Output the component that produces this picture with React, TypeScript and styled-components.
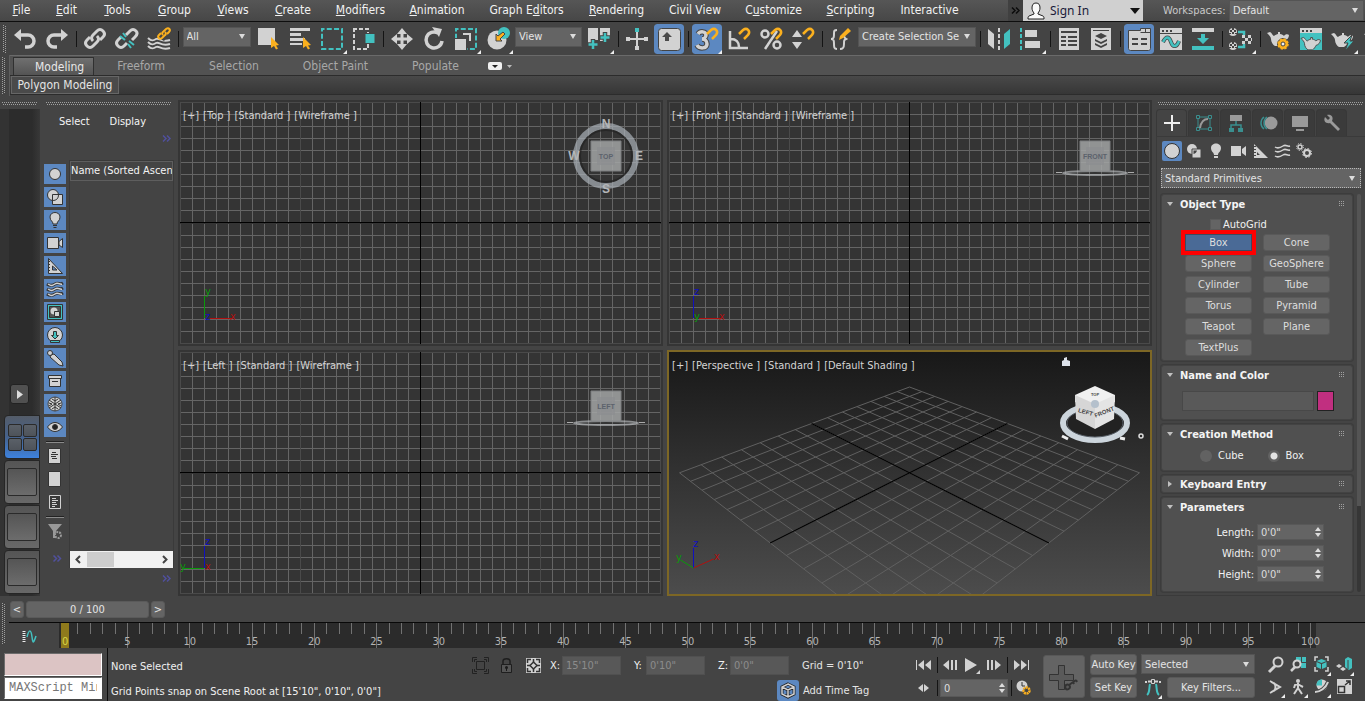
import React from "react";
import styled, { createGlobalStyle, css } from "styled-components";

const L = "#d2d2d2";
const T = "#43c1c0";
const O = "#fbb01e";
const D = "#444444";
const BLUE = "#5c88c1";

const Global = createGlobalStyle`
  * { box-sizing: border-box; }
  html, body { margin: 0; height: 100%; background: #444444; overflow: hidden; }
  body, button, input, select {
    font-family: "DejaVu Sans Condensed", "DejaVu Sans", sans-serif;
    font-size: 11px;
    color: #e4e4e4;
  }
  button { padding: 0; border: 0; background: none; }
`;

const Page = styled.div`
  display: flex;
  flex-direction: column;
  min-height: 100vh;
`;

/* ---------- shared ---------- */

const Svg = styled.svg`
  display: block;
  flex: none;
`;

const HGrip = styled.div`
  height: 4px;
  background:
    repeating-linear-gradient(90deg, #a0a0a0 0 1px, transparent 1px 2px) 0 0 / 100% 1px no-repeat,
    repeating-linear-gradient(90deg, #a0a0a0 0 1px, transparent 1px 2px) 1px 2px / 100% 1px no-repeat;
`;

const VGrip = styled.div`
  width: 4px;
  flex: none;
  background:
    repeating-linear-gradient(#a0a0a0 0 1px, transparent 1px 2px) 0 0 / 1px 100% no-repeat,
    repeating-linear-gradient(#a0a0a0 0 1px, transparent 1px 2px) 2px 1px / 1px 100% no-repeat;
`;

const SelectBox = styled.label<{ $w?: number; $h?: number; $dotted?: boolean }>`
  display: grid;
  align-items: center;
  flex: none;
  width: ${(p) => (p.$w ? `${p.$w}px` : "auto")};
  height: ${(p) => p.$h ?? 20}px;
  background: #646464;
  border: 1px ${(p) => (p.$dotted ? "dotted #b8b8b8" : "solid #545454")};
  &::after {
    content: "";
    grid-area: 1 / 1;
    justify-self: end;
    margin-right: 5px;
    border: 3px solid transparent;
    border-top: 5px solid #dcdcdc;
    border-bottom: 0;
    pointer-events: none;
  }
`;

const Select = styled.select`
  grid-area: 1 / 1;
  appearance: none;
  width: 100%;
  height: 100%;
  border: 0;
  padding: 0 14px 0 3px;
  background: transparent;
  text-overflow: clip;
`;

function Dropdown(p: { label: string; value: string; w?: number; h?: number; dotted?: boolean }) {
  return (
    <SelectBox $w={p.w} $h={p.h} $dotted={p.dotted}>
      <Select aria-label={p.label}>
        <option>{p.value}</option>
      </Select>
    </SelectBox>
  );
}

const Chevrons = ({ color }: { color: string }) => (
  <Svg width="9" height="7" viewBox="0 0 9 7"><path d="M1 .5l3 3-3 3M5 .5l3 3-3 3" fill="none" stroke={color} strokeWidth="1.500" /></Svg>
);

/* ---------- menu bar ---------- */

const MenuBar = styled.header`
  display: flex;
  height: 22px;
  background: linear-gradient(#565656, #474747);
  border-bottom: 1px solid #0e0e0e;
`;

const Menus = styled.nav`
  display: flex;
  flex: 1;
  min-width: 0;
`;

const MenuItem = styled.button<{ $w: number }>`
  flex: none;
  width: ${(p) => p.$w}px;
  height: 20px;
  font-size: 12px;
  color: #f2f2f2;
  white-space: nowrap;
  u { text-underline-offset: 1px; }
`;

const More = styled.button`
  display: grid;
  place-items: center;
  width: 15px;
  height: 21px;
  background: #404040;
`;

const SignIn = styled.button`
  display: flex;
  align-items: center;
  width: 120px;
  height: 21px;
  padding: 0 3px 0 4px;
  gap: 5px;
  background: #d0d0d0;
  color: #1b1b3a;
  font-family: "Noto Sans", sans-serif;
  font-size: 12px;
  span { flex: 1; text-align: left; }
`;

const Workspace = styled.div`
  display: flex;
  align-items: center;
  gap: 4px;
  padding-left: 20px;
  width: 222px;
  color: #c8c8c8;
  span { width: 62px; white-space: nowrap; }
`;

const menus: [string, string, string, number][] = [
  ["", "F", "ile", 43], ["", "E", "dit", 47], ["", "T", "ools", 55], ["", "G", "roup", 59],
  ["", "V", "iews", 58], ["", "C", "reate", 62], ["", "M", "odifiers", 73], ["", "A", "nimation", 80],
  ["Graph E", "d", "itors", 99], ["", "R", "endering", 81], ["Civil View", "", "", 76],
  ["C", "u", "stomize", 81], ["", "S", "cripting", 73], ["Interactive", "", "", 85],
];

function TopMenu() {
  return (
    <MenuBar>
      <Menus>
        {menus.map(([a, k, b, w]) => (
          <MenuItem key={a + k + b} $w={w}>{a}{k && <u>{k}</u>}{b}</MenuItem>
        ))}
      </Menus>
      <More aria-label="More menus"><Chevrons color="#0c0c0c" /></More>
      <SignIn>
        <Svg width="18" height="18" viewBox="0 0 18 18">
          <path d="M9 1c3 0 4 2 4 5 0 2-1 4-2 5v1l5 2c1 .6 1 1.500 1 3H1c0-1.500 0-2.400 1-3l5-2v-1C6 10 5 8 5 6c0-3 1-5 4-5z" fill="#fafafa" stroke="#222" />
        </Svg>
        <span>Sign In</span>
        <Svg width="10" height="6" viewBox="0 0 10 6"><path d="M0 0h10L5 6z" fill="#111" /></Svg>
      </SignIn>
      <Workspace>
        <span>Workspaces:</span>
        <Dropdown label="Workspaces" value="Default" w={135} h={21} />
      </Workspace>
    </MenuBar>
  );
}

/* ---------- main toolbar ---------- */

const Toolbar = styled.div`
  display: flex;
  align-items: center;
  height: 33px;
  padding-left: 2px;
  overflow: hidden;
`;

const ToolGrip = styled(VGrip)`
  height: 28px;
  margin: 0 2px 0 1px;
`;

const Tool = styled.button<{ $on?: boolean }>`
  flex: none;
  width: 32px;
  height: 32px;
  ${(p) => p.$on && css`
    background: ${BLUE};
    background-clip: content-box;
    padding: 1px;
    border-radius: 4px;
    box-shadow: inset 0 0 0 1px #444;
    svg { margin: -1px; }
  `}
`;

const Sep = styled.i`
  flex: none;
  width: 1px;
  height: 16px;
  margin: 0 2px 0 3px;
  background: #141414;
`;

const ToolSelect = styled.div<{ $w: number }>`
  display: flex;
  justify-content: center;
  flex: none;
  width: ${(p) => p.$w}px;
  padding-bottom: 4px;
`;

function Btn(p: { name: string; on?: boolean; fly?: boolean; children: React.ReactNode }) {
  return (
    <Tool aria-label={p.name} $on={p.on}>
      <Svg width="32" height="32" viewBox="0 0 32 32" fill="none">
        {p.children}
        {p.fly && <path d="M31 27v4h-4z" fill="#eee" />}
      </Svg>
    </Tool>
  );
}

const Cursor = ({ x, y }: { x: number; y: number }) => (
  <path transform={`translate(${x} ${y})`} d="M0 0l8 8-3 .5 2 3-2 1-2-3.500-3 2z" fill={O} />
);
const Magnet = ({ x, y }: { x: number; y: number }) => (
  <path transform={`translate(${x} ${y})`} d="M1 6l4-4c4-3 8 1 5 5L6 11" stroke={O} strokeWidth="2.500" />
);
const Teapot = () => (
  <path d="M0 5l3-1c2 1 3 4 4 4 1-1 3-2 4-2V4h2v2c2 0 3 1 4 2 1-2 4-2 5-1 0 3-2 5-5 6-1 2-2 4-4 5H8c-2-1-4-4-4-7 0-2-2-4-4-6z" fill={L} />
);
const Checker = ({ x, y }: { x: number; y: number }) => (
  <g transform={`translate(${x} ${y})`}>
    <circle cx="4" cy="4" r="4" fill={L} />
    <path d="M3 0h2v2H3zM1 2h2v2H1zM5 2h2v2H5zM3 4h2v2H3zM0 5h2v1H0zM6 5h2v1H6z" fill={D} />
  </g>
);

function MainToolbar() {
  return (
    <Toolbar>
      <ToolGrip />
      <Btn name="Undo"><path d="M5 12l7-6v12z" fill={L} /><path d="M11 12h8a6 6 0 0 1 0 12h-3" stroke={L} strokeWidth="3.500" /></Btn>
      <Btn name="Redo"><path d="M27 12l-7-6v12z" fill={L} /><path d="M21 12h-8a6 6 0 0 0 0 12h3" stroke={L} strokeWidth="3.500" /></Btn>
      <Sep />
      <Btn name="Link"><g stroke={L} strokeWidth="3"><path d="M14 18c-2-2-2-4 0-6l4-4c2-2 4-2 6 0s2 4 0 6l-3 3" /><path d="M18 13c2 2 2 4 0 6l-4 4c-2 2-4 2-6 0s-2-4 0-6l3-3" /></g></Btn>
      <Btn name="Unlink"><g stroke={L} strokeWidth="3"><path d="M15 12l4-4c2-2 4-2 6 0s1 4-1 6l-3 3" /><path d="M16 20l-3 3c-2 2-4 2-6 0s-2-4 0-6l3-3" /></g><path d="M9 13l5 4M18 18l5 4M12 10l3 4M17 21l3 4" stroke={T} strokeWidth="2" /></Btn>
      <Btn name="Bind to space warp"><g stroke={L} strokeWidth="2"><path d="M5 15c3 3 5 3 8 1s5 4 14 1" /><path d="M5 19c3 3 5 3 8 1s5 4 14 1" /><path d="M5 23c3 3 5 3 8 1s5 4 14 1" /></g><path d="M14 14l9-10 6 4-8 10z" fill={D} /><g stroke={O} strokeWidth="2"><path d="M20 12c-2-2 0-3 1-4l2-2c3-2 5 1 3 3l-2 2" /><path d="M22 9c2 2 0 3-1 4l-2 2c-3 2-5-1-3-3l2-2" /></g></Btn>
      <Sep />
      <ToolSelect $w={71}><Dropdown label="Selection filter" value="All" w={68} /></ToolSelect>
      <Btn name="Select object"><path d="M6 5h17v17H6z" fill={L} /><Cursor x={19} y={14} /></Btn>
      <Btn name="Select by name"><path d="M6 5h20v3H6zM6 10h11v3H6zM6 15h15v3H6zM6 20h12v2H6z" fill={L} /><Cursor x={19} y={14} /></Btn>
      <Btn name="Rectangular region" fly><path d="M6 6h20v20H6z" stroke={T} strokeWidth="2" strokeDasharray="5 2.270" strokeDashoffset="2.500" /></Btn>
      <Btn name="Window crossing"><path d="M6 6h14v20H6z" stroke={L} strokeWidth="2" strokeDasharray="4 2" strokeDashoffset="1" /><path d="M17 10.500h10v10H17z" fill={T} stroke={D} /></Btn>
      <Sep />
      <Btn name="Move"><path d="M16 5l5 6h-3.500v3.500H21V11l6 5-6 5v-3.500h-3.500V21H21l-5 6-5-6h3.500v-3.500H11V21l-6-5 6-5v3.500h3.500V11H11z" fill={L} /></Btn>
      <Btn name="Rotate"><path d="M20 10a8 8 0 1 0 4 8" stroke={L} strokeWidth="3.500" /><path d="M14 4l10 2-3 8z" fill={L} /></Btn>
      <Btn name="Scale" fly><path d="M6 6h20v20H6z" stroke={T} strokeWidth="2" strokeDasharray="5 2.270" strokeDashoffset="2.500" /><path d="M4 15h13v13H4z" fill={D} /><path d="M5 16h11v11H5z" fill={L} /><path d="M13 11h7v7" stroke={L} strokeWidth="2" /></Btn>
      <Btn name="Place" fly><circle cx="15" cy="17" r="9.500" fill={L} /><circle cx="22" cy="10" r="6" fill={T} /><path d="M14 18v-7l2 2 5-4 2 2-5 5 2 2z" fill={O} stroke={D} /></Btn>
      <ToolSelect $w={69}><Dropdown label="Reference coordinate system" value="View" w={67} /></ToolSelect>
      <Btn name="Pivot center" fly><path d="M5 5h10v12h-3v3H5zM17 5h10v8h-4v5h-6z" fill={L} /><path d="M10 16v11M5 21.500h10M22 9v11M17 14.500h10" stroke={D} strokeWidth="4.500" /><path d="M10 17v9M5.500 21.500h9M22 10v9M17.500 14.500h9" stroke={T} strokeWidth="2.500" /></Btn>
      <Sep />
      <Btn name="Manipulate"><path d="M16 8v18M6 16h20" stroke={L} strokeWidth="2" /><path d="M14 5h4v4h-4z" fill={T} /><path d="M5 14h4v4H5zM23 14h4v4h-4zM14 23h4v4h-4z" fill={L} /></Btn>
      <Btn name="Keyboard shortcut override" on><rect x="5.500" y="5.500" width="22" height="22" rx="3" fill={L} stroke={D} /><path d="M14 9l5 5h-3v4h-4v-4H9z" fill="#4a4a4a" /></Btn>
      <Sep />
      <Btn name="Snaps toggle" on fly><path d="M7 11c2-3 8-3 8 1 0 2-2 4-4 4 3 0 5 2 5 5 0 5-8 5-10 1" stroke={D} strokeWidth="5.500" /><path d="M7 11c2-3 8-3 8 1 0 2-2 4-4 4 3 0 5 2 5 5 0 5-8 5-10 1" stroke={L} strokeWidth="3.500" /><Magnet x={15} y={5} /></Btn>
      <Btn name="Angle snap"><path d="M7 8v17h18M8 16c5 0 8 3 8 8" stroke={L} strokeWidth="2.500" /><Magnet x={15} y={5} /></Btn>
      <Btn name="Percent snap"><circle cx="10" cy="11" r="3.500" stroke={L} strokeWidth="2.500" /><circle cx="22" cy="22" r="3.500" stroke={L} strokeWidth="2.500" /><path d="M22 8L10 26" stroke={L} strokeWidth="2.500" /><Magnet x={15} y={5} /></Btn>
      <Btn name="Spinner snap"><path d="M5 14l5-7 5 7zM5 19h10l-5 7z" fill={L} /><Magnet x={15} y={5} /></Btn>
      <Sep />
      <Btn name="Edit named selection sets"><path d="M12 7c-3 0-3 1-3 4s0 5-3 5c3 0 3 2 3 5s0 5 3 5M15 26c3 0 4-1 4-5s0-4 2-5c-2-1-2-2-2-4" stroke={L} strokeWidth="2" /><path d="M14 17l1-4 8-8 3 3-8 7z" fill={O} /></Btn>
      <ToolSelect $w={120}><Dropdown label="Named selection sets" value="Create Selection Se" w={118} /></ToolSelect>
      <Sep />
      <Btn name="Mirror"><path d="M5 6l6 5v15l-6-5z" fill={L} /><path d="M16 5v22" stroke={L} strokeWidth="2" strokeDasharray="4 2" /><path d="M27 6l-6 5v15l6-5z" fill={T} /></Btn>
      <Btn name="Align" fly><path d="M6 5v22" stroke={T} strokeWidth="2" strokeDasharray="4 2" /><path d="M10 7h12v7H10zM10 18h15v7H10z" fill={L} /></Btn>
      <Sep />
      <Btn name="Scene explorer"><path d="M6 5h20v22H6z" fill={L} /><path d="M8 9h16M8 14h5M15 14h9M8 18h5M15 18h9M8 22h5M15 22h9" stroke={D} strokeWidth="2" /></Btn>
      <Btn name="Layer explorer"><path d="M6 5h20v22H6z" fill={L} /><path d="M8 7.500h16" stroke={D} /><path d="M16 10l6 3-6 3-6-3zM10 16l6 3 6-3v2l-6 3-6-3zM10 20l6 3 6-3v2l-6 3-6-3z" fill={D} /></Btn>
      <Sep />
      <Btn name="Ribbon" on><path d="M5.500 7.500h12v-2h10v20c0 1-1 2-2 2h-18c-1 0-2-1-2-2z" fill={L} stroke={D} /><path d="M17.500 9.500h10M22.500 5v4" stroke={D} /><path d="M9 16h6M18 16h6M9 21h6M18 21h6" stroke={D} strokeWidth="2" /></Btn>
      <Btn name="Curve editor"><path d="M5 5h22v22H5z" fill={L} /><path d="M5 10.500h22" stroke={D} /><path d="M7 8h2M11 8h2M15 8h2" stroke={D} strokeWidth="2" /><path d="M8 19c3-6 6-6 8 0s6 5 8-1" stroke={D} strokeWidth="4" /><path d="M8 19c3-6 6-6 8 0s6 5 8-1" stroke={T} strokeWidth="2.500" /></Btn>
      <Btn name="Schematic view"><path d="M5 5h22v4H5z" fill={L} /><path d="M14 11h4v4h4l-6 6-6-6h4zM5 23h22v4H5z" fill={T} /></Btn>
      <Sep />
      <Btn name="Material editor" fly><path d="M13 9h6v3M13 24h6v-3" stroke={T} strokeWidth="2.500" /><Checker x={4} y={5} /><Checker x={4} y={19} /><path d="M17 12h3v3h-3zM23 12h3v3h-3zM20 15h3v3h-3zM17 18h3v3h-3zM23 18h3v3h-3zM26 15h1v3h-1z" fill={L} /></Btn>
      <Sep />
      <Btn name="Render setup"><g transform="translate(4 5)"><Teapot /></g><circle cx="20" cy="21" r="5.500" fill={O} stroke={D} /><circle cx="20" cy="21" r="4.500" stroke={O} strokeWidth="2.500" strokeDasharray="2 1.530" /><circle cx="20" cy="21" r="2" fill="#f0f0f0" stroke={D} /></Btn>
      <Btn name="Rendered frame window"><path d="M5 5h22v22H5z" fill={T} /><path d="M5 5h22v5H5z" fill={L} /><path d="M7 8h2M11 8h2M15 8h2" stroke={D} strokeWidth="2" /><g transform="translate(6 11) scale(.88)" stroke={D}><Teapot /></g></Btn>
      <Btn name="Render production" fly><g transform="translate(4 6)"><Teapot /></g><path d="M25 12l-8 8h4l-3 8 9-10h-4z" fill={T} stroke={D} /></Btn>
      <Btn name="Render in cloud"><g transform="translate(5 6)"><Teapot /></g></Btn>
    </Toolbar>
  );
}

/* ---------- ribbon ---------- */

const Ribbon = styled.section`
  display: flex;
  height: 41px;
  padding-left: 2px;
  gap: 3px;
`;

const RibbonGrip = styled(VGrip)`margin: 2px 0;`;

const RibbonBody = styled.div`
  flex: 1;
  border-left: 1px solid #5e5e5e;
`;

const Tabs = styled.div`
  display: flex;
  align-items: flex-end;
  height: 21px;
  padding-left: 3px;
  background: #525252;
  border-top: 1px solid #6a6a6a;
  border-bottom: 1px solid #2c2c2c;
`;

const RibbonTab = styled.button<{ $on?: boolean }>`
  height: 18px;
  padding: 0 22px;
  font-size: 12px;
  color: #a8a8a8;
  ${(p) => p.$on && css`
    padding: 0 9px 0 21px;
    margin-right: 1px;
    color: #e8e8e8;
    background: linear-gradient(#707070, #545454);
    border: 1px solid #303030;
    border-bottom: 0;
  `}
`;

const RibbonMenu = styled.button`
  display: flex;
  align-items: center;
  gap: 5px;
  height: 18px;
  margin-left: 7px;
`;

const RibbonPanels = styled.div`
  display: flex;
  height: 19px;
  padding-left: 1px;
  background: linear-gradient(#494949, #363636);
  border-bottom: 1px solid #2c2c2c;
`;

const PanelButton = styled.button`
  padding: 0 4px;
  width: 108px;
  font-size: 12px;
  background: #4a4a4a;
  border: 1px solid #666;
  white-space: nowrap;
`;

function RibbonBar() {
  return (
    <Ribbon>
      <RibbonGrip />
      <RibbonBody>
        <Tabs>
          <RibbonTab $on>Modeling</RibbonTab>
          <RibbonTab>Freeform</RibbonTab>
          <RibbonTab>Selection</RibbonTab>
          <RibbonTab>Object Paint</RibbonTab>
          <RibbonTab>Populate</RibbonTab>
          <RibbonMenu aria-label="Ribbon display">
            <Svg width="14" height="8" viewBox="0 0 14 8"><rect width="14" height="8" rx="2" fill="#f0f0f0" /><path d="M4 3h6L7 6z" fill="#222" /></Svg>
            <Svg width="5" height="3" viewBox="0 0 5 3"><path d="M0 0h5L2.500 3z" fill="#bbb" /></Svg>
          </RibbonMenu>
        </Tabs>
        <RibbonPanels><PanelButton>Polygon Modeling</PanelButton></RibbonPanels>
      </RibbonBody>
    </Ribbon>
  );
}

/* ---------- workspace ---------- */

const Main = styled.main`
  display: flex;
  flex: 1;
  padding-top: 4px;
`;

const LayoutColumn = styled.aside`
  display: flex;
  flex-direction: column;
  width: 40px;
  flex: none;
`;

const LayoutGrip = styled(HGrip)`margin: 2px 3px 3px 2px;`;

const LayoutBar = styled.div`
  display: flex;
  flex-direction: column;
  justify-content: flex-end;
  align-items: flex-end;
  gap: 1px;
  flex: 1;
  padding-bottom: 2px;
  background: linear-gradient(90deg, #333 0 9px, #2c2c2c 9px 32px, #383838);
`;

const Expand = styled.button`
  display: grid;
  place-items: center;
  width: 19px;
  height: 20px;
  margin: 0 11px 10px 0;
  background: #505050;
  border: 1px solid #222;
  border-radius: 3px;
`;

const LayoutTab = styled.button<{ $on?: boolean }>`
  display: grid;
  grid-template-columns: ${(p) => (p.$on ? "14px 14px" : "30px")};
  grid-auto-rows: ${(p) => (p.$on ? 13 : 28)}px;
  gap: 1px;
  place-content: center;
  width: 36px;
  height: 44px;
  border: 1px solid #262626;
  border-radius: 4px 0 0 4px;
  background: ${(p) => (p.$on ? "linear-gradient(#545c68, #46628c 50%, #3d82de)" : "linear-gradient(#555, #686868)")};
`;

const Pane = styled.i<{ $tint?: boolean }>`
  border: 1px solid #2a2a2a;
  border-radius: 2px;
  background: ${(p) => (p.$tint ? "linear-gradient(#5a6068, #4e535a)" : "linear-gradient(#555, #6c6c6c)")};
`;

function LayoutTabs() {
  return (
    <LayoutColumn>
      <LayoutGrip />
      <LayoutBar>
        <Expand aria-label="Expand layouts"><Svg width="6" height="9" viewBox="0 0 6 9"><path d="M0 0l6 4.500L0 9z" fill="#ddd" /></Svg></Expand>
        <LayoutTab $on aria-label="Four views"><Pane $tint /><Pane $tint /><Pane $tint /><Pane $tint /></LayoutTab>
        <LayoutTab aria-label="Layout 2"><Pane /></LayoutTab>
        <LayoutTab aria-label="Layout 3"><Pane /></LayoutTab>
        <LayoutTab aria-label="Layout 4"><Pane /></LayoutTab>
      </LayoutBar>
    </LayoutColumn>
  );
}

const Explorer = styled.aside`
  display: flex;
  flex-direction: column;
  width: 138px;
  flex: none;
  padding: 2px 5px 0 4px;
`;

const ExplorerGrip = styled(HGrip)`margin: 0 2px;`;

const ExplorerMenu = styled.div`
  display: flex;
  gap: 20px;
  padding: 8px 0 0 15px;
  button { color: #f4f4f4; height: 14px; }
`;

const Chevron = styled.button`
  display: grid;
  place-items: center;
  align-self: flex-end;
  width: 12px;
  height: 15px;
  margin: 3px 1px 0 0;
`;

const ExplorerBody = styled.div`
  display: flex;
  gap: 3px;
  margin-top: 14px;
`;

const FilterColumn = styled.div`
  display: flex;
  flex-direction: column;
  align-items: center;
  gap: 3px;
  width: 22px;
  padding-top: 4px;
`;

const Filter = styled.button<{ $off?: boolean }>`
  width: 22px;
  height: 20px;
  background: ${(p) => (p.$off ? "transparent" : BLUE)};
`;

const Rule = styled.i`
  width: 18px;
  height: 2px;
  margin: 1px 0 0;
  background: #8a8a8a;
  border-top: 1px solid #222;
`;

const List = styled.div`
  display: flex;
  flex-direction: column;
  width: 105px;
  height: 408px;
  border: 1px solid #3a3a3a;
  border-bottom: 0;
`;

const ListHead = styled.div`
  flex: none;
  height: 20px;
  border: 1px solid #5e5e5e;
  line-height: 18px;
  color: #f4f4f4;
  white-space: nowrap;
  overflow: hidden;
`;

const ScrollBar = styled.div`
  display: flex;
  align-items: center;
  height: 17px;
  margin-top: auto;
  padding: 0 5px;
  background: #f1f1f1;
  i { width: 27px; height: 15px; margin: 0 auto 0 6px; background: #cdcdcd; }
`;

function F(p: { name: string; off?: boolean; children: React.ReactNode }) {
  return (
    <Filter aria-label={p.name} $off={p.off}>
      <Svg width="22" height="20" viewBox="0 0 22 20" fill={L} stroke="#333">{p.children}</Svg>
    </Filter>
  );
}

function SceneExplorer() {
  return (
    <Explorer>
      <ExplorerGrip />
      <ExplorerMenu><button>Select</button><button>Display</button></ExplorerMenu>
      <Chevron aria-label="More"><Chevrons color="#50509c" /></Chevron>
      <ExplorerBody>
        <FilterColumn>
          <F name="Geometry"><circle cx="11" cy="10" r="5.500" /></F>
          <F name="Shapes"><circle cx="9" cy="8" r="5.500" /><path d="M8.500 7.500h10v10h-10z" /><path d="M14.500 7.500c0 4-2 6-6 6" fill="none" /></F>
          <F name="Lights"><path d="M9 14c0-3-3-3-3-7 0-6 10-6 10 0 0 4-3 4-3 7zM9 15.500h4M9.500 17.500h3" /></F>
          <F name="Cameras"><path d="M3.500 4.500h11v11h-11zM15 8.500l3.500-3v9L15 12z" /></F>
          <F name="Helpers"><path d="M4.500 2.500v15h14z" /><path d="M8.500 10v4H13z" fill={BLUE} /><path d="M4 5.500h2M4 8.500h2M4 11.500h2M4 14.500h2" /></F>
          <F name="Space warps"><g fill="none"><path d="M3 5c3 2 5 2 8 0s5 1 8-1M3 10c3 2 5 2 8 0s5 1 8-1M3 15c3 2 5 2 8 0s5 1 8-1" strokeWidth="3" /><path d="M4 5c3 2 4 2 7 0s5 1 7 0M4 10c3 2 4 2 7 0s5 1 7 0M4 15c3 2 4 2 7 0s5 1 7 0" stroke={L} strokeWidth="1.500" /></g></F>
          <F name="Groups"><path d="M3.500 2.500h15v15h-15z" fill={T} /><path d="M5.500 4.500h11v11h-11z" fill="#555" /><circle cx="10" cy="9" r="3.500" stroke="none" /><path d="M10.500 9.500h5v5h-5z" /></F>
          <F name="Xrefs"><circle cx="11" cy="10" r="7.500" /><path d="M9.500 6.500h3v4h2l-3.500 3.500-3.500-3.500h2zM6.500 15.500h9v2h-9z" fill={T} /></F>
          <F name="Bones"><path d="M7 7l3-1 8 8 1 4-4-1-9-8z" /><circle cx="6" cy="5" r="2.500" /></F>
          <F name="Containers"><path d="M5.500 7.500h11v8h-11zM4.500 4.500h13v3h-13z" /><path d="M8 10.500h6" /></F>
          <F name="Frozen"><circle cx="11" cy="10" r="7" stroke="#444" /><path d="M11 3v14M5 6l12 8M17 6L5 14" fill="none" /><path d="M8 5l3 2 3-2M8 15l3-2 3 2M5 9l3 1-3 2M17 9l-3 1 3 2" fill="none" /></F>
          <F name="Hidden"><path d="M3.500 10c4-6 11-6 15 0-4 6-11 6-15 0z" /><circle cx="11" cy="10" r="2.500" fill="#222" /></F>
          <Rule />
          <F name="Display all" off><path d="M4.500 2.500h12v15h-12z" /><path d="M8 6.500h4M7 8.500h7M7 10.500h5M8 12.500h5" /></F>
          <F name="Display none" off><path d="M4.500 2.500h12v15h-12z" /></F>
          <F name="Invert display" off><path d="M5.500 3.500h11v13h-11z" fill="#3a3a3a" stroke={L} /><path d="M8 6.500h4M8 8.500h6M8 10.500h4M8 12.500h5M8 14.500h3" stroke={L} /></F>
          <Rule />
          <F name="Filter settings" off><path d="M4 3h14l-6 7v7H9v-7z" fill="#999" stroke="none" /><circle cx="14" cy="14" r="3" fill={D} stroke="#999" strokeWidth="2" strokeDasharray="2 1" /></F>
          <F name="More filters" off><path d="M9.500 11.500l3 3-3 3M13.500 11.500l3 3-3 3" fill="none" stroke="#50509c" strokeWidth="1.500" /></F>
        </FilterColumn>
        <List>
          <ListHead>Name (Sorted Ascend</ListHead>
          <ScrollBar>
            <Svg width="6" height="9" viewBox="0 0 6 9"><path d="M5 1L1.500 4.500 5 8" fill="none" stroke="#444" strokeWidth="2" /></Svg>
            <i />
            <Svg width="6" height="9" viewBox="0 0 6 9"><path d="M1 1l3.500 3.500L1 8" fill="none" stroke="#444" strokeWidth="2" /></Svg>
          </ScrollBar>
        </List>
      </ExplorerBody>
      <Chevron aria-label="More columns"><Chevrons color="#50509c" /></Chevron>
    </Explorer>
  );
}

/* ---------- viewports ---------- */

const Viewports = styled.section`
  display: grid;
  grid-template: 1fr 1fr / 1fr 1fr;
  gap: 4px;
  flex: 1;
  min-width: 0;
`;

const Viewport = styled.div<{ $active?: boolean }>`
  position: relative;
  display: flex;
  flex-direction: column;
  min-height: 0;
  border: 2px solid ${(p) => (p.$active ? "#7d6725" : "#353535")};
  background: ${(p) => (p.$active ? "linear-gradient(#181818, #4c4c4c)" : "#343434")};
`;

const HalfGrid = styled.div<{ $lower?: boolean }>`
  ${(p) => (p.$lower ? "flex: 1; margin-top: 1px;" : "height: calc(50% - 1px);")}
  background-image:
    linear-gradient(90deg, #4a4a4a 1px, transparent 1px),
    linear-gradient(#4a4a4a 1px, transparent 1px),
    linear-gradient(90deg, #656565 1px, transparent 1px),
    linear-gradient(#656565 1px, transparent 1px);
  background-size: 120px 120px, 120px 120px, 12px 12px, 12px 12px;
  background-position: 0 ${(p) => (p.$lower ? -1 : 0)}px;
`;

const AxisLine = styled.i`
  flex: none;
  height: 1px;
  background: #000;
  &::after {
    content: "";
    position: absolute;
    top: 0;
    bottom: 0;
    left: calc(50% - 1px);
    width: 1px;
    background: #000;
  }
`;

const ViewLabel = styled.div`
  position: absolute;
  top: 6px;
  left: 3px;
  display: flex;
  gap: 4px;
  z-index: 1;
  button { color: #d4d4d4; height: 14px; white-space: pre; }
`;

const Gizmo = styled.svg`
  position: absolute;
  left: 0;
  bottom: 18px;
  font-size: 11px;
`;

const Cube = styled.svg`
  position: absolute;
  top: 5px;
  right: 0;
  font-family: "Liberation Sans", sans-serif;
  font-weight: bold;
  text-anchor: middle;
`;

const Scene = styled.svg`
  width: 100%;
  height: 100%;
`;

const R = "#b01010";
const G = "#0a9a0a";
const B = "#1010c0";

function Label({ parts }: { parts: string[] }) {
  return <ViewLabel>{parts.map((t) => <button key={t}>[{t}]</button>)}</ViewLabel>;
}

function FlatCube({ face }: { face: string }) {
  return (
    <Cube width="110" height="90" viewBox="0 0 110 90">
      {face === "TOP" ? (
        <g>
          <circle cx="55" cy="49" r="30" fill="none" stroke="#aab0b8" strokeOpacity=".7" strokeWidth="6" />
          <circle cx="55" cy="49" r="26" fill="none" stroke="#222" strokeOpacity=".7" strokeWidth="2" />
          <g fill="#b4b6b8" fontSize="12"><text x="55" y="21">N</text><text x="55" y="86">S</text><text x="23" y="53">W</text><text x="88" y="53">E</text></g>
        </g>
      ) : (
        <g fill="none">
          <ellipse cx="55" cy="66" rx="32" ry="2" stroke="#c4c8cc" strokeOpacity=".6" strokeWidth="2" />
          <path d="M16 65.500h6M88 65.500h6" stroke="#aaa" />
        </g>
      )}
      <path d="M40 34h30v30H40z" fill="#a2a4a4" fillOpacity=".85" stroke="#7c7e80" />
      <path d="M46 40h18v18H46z" fill="#8b8d90" fillOpacity=".7" />
      <text x="55" y="52" fontSize="7" fill="#5c626c">{face}</text>
    </Cube>
  );
}

function FlatView({ name, axes }: { name: string; axes: React.ReactNode }) {
  return (
    <Viewport>
      <HalfGrid />
      <AxisLine />
      <HalfGrid $lower />
      <Label parts={["+", `${name} `, "Standard ", "Wireframe "]} />
      <FlatCube face={name.toUpperCase()} />
      <Gizmo width="60" height="46" viewBox="0 0 60 46">{axes}</Gizmo>
    </Viewport>
  );
}

/* Ground plane point (u, v in -1..1) projected to the scene's coordinates. */
const project = (u: number, v: number) => {
  const a = u + v;
  const w = 1 - 0.1748 * a;
  return `${(240.5 + (115 * (u - v)) / w).toFixed(1)} ${(120.8 + (57.9 * a) / w).toFixed(1)}`;
};
const DIV = 7;
const steps = Array.from({ length: DIV * 2 + 1 }, (_, i) => (i - DIV) / DIV);

function PerspectiveView() {
  return (
    <Viewport $active>
      <Scene viewBox="0 0 481 242" preserveAspectRatio="xMidYMid slice" fill="none">
        {steps.map((s) => <path key={s} d={`M${project(s, -1)}L${project(s, 1)}M${project(-1, s)}L${project(1, s)}`} stroke="#606060" />)}
        <path d={`M${project(0, -1)}L${project(0, 1)}M${project(-1, 0)}L${project(1, 0)}`} stroke="#000" strokeWidth="1.200" />
      </Scene>
      <Label parts={["+", "Perspective ", "Standard ", "Default Shading "]} />
      <Cube width="110" height="100" viewBox="0 0 110 100">
        <path d="M22 4l2-1V1l3-1v3l3 1v5h-8z" fill="#dde2ea" />
        <ellipse cx="55" cy="66" rx="32" ry="17" stroke="#ccd5dc" strokeWidth="6" fill="#222" />
        <ellipse cx="55" cy="66" rx="28" ry="14" stroke="#555c64" fill="none" />
        <path d="M55 29l20 9v7L55 54 35 45v-7z" fill="#f0f0f0" />
        <path d="M35 38l20 9v25L36 62z" fill="#d6d6d6" />
        <path d="M75 38l-20 9v25l19-10z" fill="#e4e4e4" />
        <g fill="#444"><text transform="translate(45 57) rotate(16)" fontSize="6">LEFT</text><text transform="translate(65 57) rotate(-22)" fontSize="6">FRONT</text><text x="55" y="39" fontSize="4">TOP</text></g>
        <circle cx="55" cy="47" r="4" fill="#b4c0cc" />
        <path d="M22 79l6 3M80 81l5 1" stroke="#eee" strokeWidth="3" />
        <circle cx="101" cy="79" r="2" fill="none" stroke="#ddd" strokeWidth="1.500" />
      </Cube>
      <Gizmo width="60" height="46" viewBox="0 0 60 46">
        <path d="M24.500 38V18" stroke={B} /><path d="M24.500 38l20-9" stroke={R} /><path d="M24.500 38l-13-8" stroke={G} />
        <text x="24" y="17" fill={B}>z</text><text x="45" y="30" fill={R}>x</text><text x="7" y="31" fill={G}>y</text>
      </Gizmo>
    </Viewport>
  );
}

/* ---------- command panel ---------- */

const Command = styled.aside`
  display: flex;
  flex-direction: column;
  width: 209px;
  flex: none;
  margin-left: 4px;
  padding-top: 2px;
`;

const CommandGrip = styled(HGrip)`margin: 0 2px 3px;`;

const CommandTabs = styled.div`
  display: flex;
  gap: 1px;
`;

const CommandTab = styled.button<{ $on?: boolean }>`
  display: grid;
  place-items: center;
  width: 31px;
  height: 27px;
  border: 1px solid #383838;
  border-bottom: 0;
  border-radius: 4px 4px 0 0;
  background: ${(p) => (p.$on ? "#444" : "#3b3b3b")};
`;

const CommandBody = styled.div`
  display: flex;
  flex-direction: column;
  flex: 1;
  padding: 4px 4px 3px;
  border: 1px solid #3a3a3a;
  border-right: 0;
`;

const Categories = styled.div`
  display: flex;
  gap: 2px;
  padding-left: 1px;
  margin-bottom: 7px;
`;

const Category = styled.button<{ $on?: boolean }>`
  width: 20px;
  height: 20px;
  border-radius: 2px;
  background: ${(p) => (p.$on ? BLUE : "transparent")};
`;

const RollArea = styled.div`
  display: flex;
  gap: 4px;
  margin-top: 6px;
  flex: 1;
`;

const Rolls = styled.div`
  display: flex;
  flex-direction: column;
  gap: 4px;
  flex: 1;
`;

const RollScroll = styled.div`
  width: 4px;
  background: linear-gradient(#545454 0 312px, #363636 312px);
  border-radius: 2px;
`;

const Roll = styled.section<{ $h?: number }>`
  min-height: ${(p) => p.$h ?? 0}px;
  background: #505050;
  border: 1px solid #434343;
  box-shadow: 0 0 0 1px #3c3c3c;
  border-radius: 3px;
  ${(p) => !p.$h && "flex: 1;"}
`;

const RollHead = styled.button<{ $closed?: boolean }>`
  display: flex;
  align-items: center;
  width: 100%;
  height: ${(p) => (p.$closed ? 16 : 18)}px;
  padding: 0 7px 0 5px;
  gap: 7px;
  font-weight: bold;
  color: #f4f4f4;
  span { flex: 1; text-align: left; }
`;

const CheckRow = styled.label`
  display: flex;
  align-items: center;
  gap: 2px;
  height: 16px;
  margin: 3px 0 0 48px;
  color: #f0f0f0;
  input { appearance: none; width: 11px; height: 11px; margin: 0; background: #646464; border: 1px solid #5a5a5a; }
`;

const ButtonGrid = styled.div`
  display: grid;
  grid-template-columns: 67px 67px;
  gap: 4px 11px;
  margin: 2px 0 0 23px;
`;

const ObjectButton = styled.button<{ $on?: boolean }>`
  height: 17px;
  border-radius: 3px;
  border: 1px solid #595959;
  background: #656565;
  color: #dedede;
  ${(p) => p.$on && css`
    background: #4a6a96;
    border-color: #3c4a5e;
    border-radius: 0;
    outline: 4px solid #ff0000;
    z-index: 1;
  `}
`;

const NameRow = styled.div`
  display: flex;
  gap: 3px;
  padding: 7px 0 0 20px;
  input { width: 132px; height: 20px; background: #595959; border: 1px solid #484848; }
  button { width: 17px; height: 20px; background: #c12f80; border: 1px solid #222; }
`;

const Radios = styled.div`
  display: flex;
  gap: 24px;
  padding: 6px 0 0 38px;
`;

const RadioLabel = styled.label`
  display: flex;
  align-items: center;
  gap: 6px;
  color: #f0f0f0;
  input {
    appearance: none;
    width: 12px;
    height: 12px;
    margin: 0;
    border-radius: 6px;
    background: #626262;
  }
  input:checked { background: radial-gradient(circle, #e4e4e4 0 3px, #626262 4px); }
`;

const Params = styled.div`
  display: flex;
  flex-direction: column;
  gap: 5px;
  padding: 8px 28px 0 0;
`;

const ParamRow = styled.label`
  display: flex;
  justify-content: flex-end;
  align-items: center;
  gap: 3px;
  height: 16px;
  color: #f0f0f0;
`;

const Spin = styled.span<{ $w: number; $h: number }>`
  display: flex;
  align-items: center;
  width: ${(p) => p.$w}px;
  height: ${(p) => p.$h}px;
  padding: 0 2px;
  background: #646464;
  border: 1px solid #585858;
  input { flex: 1; min-width: 0; border: 0; padding: 0 1px; background: transparent; color: #ddd; }
`;

const Arrows = () => (
  <Svg width="6" height="10" viewBox="0 0 6 10"><path d="M0 4l3-4 3 4zM0 6h6l-3 4z" fill="#ddd" /></Svg>
);

function Rollout(p: { title: string; h?: number; closed?: boolean; children?: React.ReactNode }) {
  return (
    <Roll $h={p.h}>
      <RollHead $closed={p.closed}>
        <Svg width="6" height="6" viewBox="0 0 6 6"><path d={p.closed ? "M1 0l4 3-4 3z" : "M0 1h6L3 5z"} fill="#c0c0c0" /></Svg>
        <span>{p.title}</span>
        <Svg width="6" height="6" viewBox="0 0 6 6"><path d="M0 .5h6M0 2.500h6M0 4.500h6" stroke="#a0a0a0" strokeDasharray="1 1" /></Svg>
      </RollHead>
      {p.children}
    </Roll>
  );
}

function Cat(p: { name: string; on?: boolean; children: React.ReactNode }) {
  return (
    <Category aria-label={p.name} $on={p.on}>
      <Svg width="20" height="20" viewBox="0 0 20 20" fill={L}>{p.children}</Svg>
    </Category>
  );
}

const A = "#9a9a9a";
const T2 = "#3a8f8f";

function CommandPanel() {
  return (
    <Command>
      <CommandGrip />
      <CommandTabs>
        <CommandTab $on aria-label="Create"><Svg width="18" height="18" viewBox="0 0 18 18"><path d="M9 1v16M1 9h16" stroke="#eee" strokeWidth="2" /></Svg></CommandTab>
        <CommandTab aria-label="Modify"><Svg width="18" height="18" viewBox="0 0 18 18" fill="none"><path d="M4 3h10M3 4v10M15 4v10M4 15h10" stroke={T2} /><path d="M1.500 1.500h3v3h-3zM13.500 1.500h3v3h-3zM1.500 13.500h3v3h-3zM13.500 13.500h3v3h-3z" fill="#3b3b3b" stroke={T2} /><path d="M5 14C6 8 9 5 13 5" stroke={A} strokeWidth="2" /></Svg></CommandTab>
        <CommandTab aria-label="Hierarchy"><Svg width="18" height="18" viewBox="0 0 18 18"><path d="M3 1h12v6H3z" fill={A} /><path d="M9 7v4M4 14v-3h10v3" fill="none" stroke={T2} strokeWidth="1.500" /><path d="M2 14h5v4H2zM11 14h5v4h-5z" fill={T2} /></Svg></CommandTab>
        <CommandTab aria-label="Motion"><Svg width="20" height="18" viewBox="0 0 20 18" fill="none"><circle cx="13" cy="9" r="6.500" fill={A} /><path d="M6 3c-4 3-4 9 0 12M9 3c-4 3-4 9 0 12" stroke={T2} strokeWidth="1.500" /></Svg></CommandTab>
        <CommandTab aria-label="Display"><Svg width="18" height="18" viewBox="0 0 18 18"><path d="M1 2h16v11H1zM5 15h8v2H5z" fill={A} /></Svg></CommandTab>
        <CommandTab aria-label="Utilities"><Svg width="18" height="18" viewBox="0 0 18 18"><path d="M2 3l3 3 2-2-3-3c4-1 7 2 5 6l8 8-2 2-8-8c-4 1-7-2-5-6z" fill={A} /></Svg></CommandTab>
      </CommandTabs>
      <CommandBody>
        <Categories>
          <Cat name="Geometry" on><circle cx="10" cy="10" r="7.500" stroke="#333" /></Cat>
          <Cat name="Shapes"><circle cx="8" cy="8" r="5" /><path d="M8 8h9v9H8z" stroke={D} /><path d="M9.500 9.500H13c-.5 2-1.500 3-3.500 3.500z" fill={D} /></Cat>
          <Cat name="Lights"><path d="M8 14c0-3-3-3-3-7 0-6 10-6 10 0 0 4-3 4-3 7zM8 15h4v2H8z" /></Cat>
          <Cat name="Cameras"><path d="M3 5h10v10H3zM14 8l4-3v10l-4-3z" /></Cat>
          <Cat name="Helpers"><path d="M4 3v14h14z" /><path d="M7 11v3h3zM4 5h2v1H4zM4 8h2v1H4zM4 11h2v1H4zM4 14h2v1H4z" fill={D} /></Cat>
          <Cat name="Space warps"><path d="M3 6c3 2 5 1 8-1s4 1 7 0M3 10c3 2 5 1 8-1s4 1 7 0M3 15c3 2 5 1 8-1s4 1 7 0" fill="none" stroke={L} strokeWidth="1.500" /></Cat>
          <Cat name="Systems"><g fill="none" stroke={L}><circle cx="6" cy="6" r="2" strokeWidth="1.500" /><circle cx="6" cy="6" r="3.500" strokeDasharray="1.200 1.550" /><circle cx="13" cy="12" r="3" strokeWidth="2" /><circle cx="13" cy="12" r="4.500" strokeDasharray="1.800 1.730" /></g></Cat>
        </Categories>
        <Dropdown label="Object category" value="Standard Primitives" dotted />
        <RollArea>
          <Rolls>
            <Rollout title="Object Type" h={167}>
              <CheckRow><input type="checkbox" />AutoGrid</CheckRow>
              <ButtonGrid>
                <ObjectButton $on>Box</ObjectButton>
                {["Cone", "Sphere", "GeoSphere", "Cylinder", "Tube", "Torus", "Pyramid", "Teapot", "Plane", "TextPlus"].map((n) => (
                  <ObjectButton key={n}>{n}</ObjectButton>
                ))}
              </ButtonGrid>
            </Rollout>
            <Rollout title="Name and Color" h={55}>
              <NameRow><input aria-label="Object name" /><button aria-label="Object color" /></NameRow>
            </Rollout>
            <Rollout title="Creation Method" h={47}>
              <Radios>
                <RadioLabel><input type="radio" name="method" />Cube</RadioLabel>
                <RadioLabel><input type="radio" name="method" defaultChecked />Box</RadioLabel>
              </Radios>
            </Rollout>
            <Rollout title="Keyboard Entry" h={18} closed />
            <Rollout title="Parameters">
              <Params>
                {["Length:", "Width:", "Height:"].map((n) => (
                  <ParamRow key={n}>{n}<Spin $w={67} $h={16}><input defaultValue={`0'0"`} /><Arrows /></Spin></ParamRow>
                ))}
              </Params>
            </Rollout>
          </Rolls>
          <RollScroll />
        </RollArea>
      </CommandBody>
    </Command>
  );
}

/* ---------- track bar ---------- */

const Track = styled.section`
  display: grid;
  grid-template-columns: 9px 1fr;
  height: 52px;
`;

const TrackGrip = styled(VGrip)`
  grid-row: 1 / 3;
  margin: 7px 0 4px 2px;
`;

const SliderRow = styled.div`
  display: flex;
  gap: 2px;
  height: 26px;
  padding: 5px 0 0 1px;
`;

const SliderButton = styled.button<{ $w: number }>`
  width: ${(p) => p.$w}px;
  height: 17px;
  border-radius: 3px;
  border: 1px solid #5a5a5a;
  background: #646464;
`;

const TimeRow = styled.div`
  display: flex;
  height: 26px;
  border-top: 1px solid #080808;
`;

const CurveToggle = styled.button`
  width: 50px;
  padding-left: 13px;
`;

const Ticks = styled.div`
  display: flex;
  flex: 1;
  margin-right: 49px;
  background: #2b2b2b;
`;

const Tick = styled.span<{ $major?: boolean; $now?: boolean }>`
  display: flex;
  justify-content: center;
  flex: 1 1 0;
  min-width: 0;
  white-space: nowrap;
  padding-top: 11px;
  line-height: 15px;
  color: #b4b4b4;
  background: linear-gradient(#727272, #727272) center top / 1px ${(p) => (p.$major ? 25 : 11)}px no-repeat;
  ${(p) => p.$now && css`
    background: linear-gradient(#8f7a1c, #8f7a1c) center top / 8px 25px no-repeat;
    color: #d6d644;
  `}
`;

function TrackBar() {
  return (
    <Track>
      <TrackGrip />
      <SliderRow>
        <SliderButton $w={14} aria-label="Previous frame">&lt;</SliderButton>
        <SliderButton $w={123}>0 / 100</SliderButton>
        <SliderButton $w={14} aria-label="Next frame">&gt;</SliderButton>
      </SliderRow>
      <TimeRow>
        <CurveToggle aria-label="Mini curve editor">
          <Svg width="16" height="14" viewBox="0 0 16 14" fill="none"><path d="M2 2v11" stroke="#eee" strokeWidth="3" strokeDasharray="1 1" /><path d="M5 8c2-8 4-8 5 0s2 5 4-1" stroke={T} strokeWidth="1.500" /></Svg>
        </CurveToggle>
        <Ticks>
          {Array.from({ length: 101 }, (_, i) => (
            <Tick key={i} $major={i % 5 === 0} $now={i === 0}>{i % 5 === 0 ? i : ""}</Tick>
          ))}
        </Ticks>
      </TimeRow>
    </Track>
  );
}

/* ---------- status bar ---------- */

const Status = styled.footer`
  display: flex;
  height: 53px;
`;

const Listener = styled.div`
  display: flex;
  flex-direction: column;
  gap: 1px;
  width: 108px;
  flex: none;
  padding: 5px 6px 2px 4px;
  border-right: 1px solid #0c0c0c;
  input {
    width: 98px;
    height: 23px;
    padding: 0 4px;
    border: 1px solid #6c6c6c;
    border-right-color: #fff;
    border-bottom-color: #fff;
    background: #fff;
    font-family: "Liberation Mono", monospace;
    font-size: 12px;
  }
  input:first-child { background: #dcc4c4; }
  input::placeholder { color: #777; opacity: 1; }
`;

const Messages = styled.div`
  display: flex;
  flex-direction: column;
  flex: 1;
  padding: 8px 0 0 3px;
  color: #f0f0f0;
  white-space: nowrap;
  p { margin: 0 0 4px; height: 21px; line-height: 21px; }
`;

const Coords = styled.div`
  display: flex;
  flex-direction: column;
  width: 440px;
  flex: none;
`;

const CoordRow = styled.div`
  display: flex;
  align-items: center;
  height: 20px;
  margin-top: 7px;
  gap: 8px;
`;

const CoordField = styled.label`
  display: flex;
  align-items: center;
  gap: 2px;
  margin-right: 5px;
  color: #f0f0f0;
  span { width: 10px; white-space: nowrap; }
  input { width: 59px; height: 19px; padding: 0 3px; background: #585858; border: 1px solid #505050; color: #8c8c8c; }
`;

const TagRow = styled.div`
  display: flex;
  align-items: center;
  gap: 4px;
  margin: 4px 0 0 305px;
  height: 22px;
`;

const TagButton = styled.button`
  width: 22px;
  height: 21px;
  border-radius: 3px;
  background: ${BLUE};
`;

const Playback = styled.div`
  display: flex;
  flex-direction: column;
  width: 131px;
  flex: none;
  gap: 3px;
  padding-top: 7px;
`;

const PlayRow = styled.div`
  display: flex;
  align-items: center;
  height: 20px;
`;

const PlayButton = styled.button<{ $w: number }>`
  display: grid;
  place-items: center;
  flex: none;
  width: ${(p) => p.$w}px;
  height: 20px;
`;

const BigKey = styled.button`
  display: grid;
  place-items: center;
  flex: none;
  width: 42px;
  height: 43px;
  margin: 7px 5px 0 0;
  border: 1px solid #585858;
  border-radius: 3px;
  background: #646464;
`;

const Keys = styled.div`
  display: grid;
  grid-template-columns: 47px 30px 88px;
  grid-template-rows: 21px 21px;
  gap: 2px 0;
  flex: none;
  padding-top: 6px;
  margin-right: 9px;
`;

const KeyButton = styled.button`
  border: 1px solid #585858;
  border-radius: 3px;
  background: #646464;
  white-space: nowrap;
`;

const SelectedCell = styled.div`
  grid-column: 2 / 4;
  padding-left: 4px;
`;

const Nav = styled.div`
  display: grid;
  grid-template-columns: repeat(4, 23px);
  grid-template-rows: 22px 22px;
  padding-top: 6px;
  flex: none;
  width: 101px;
`;

const IconButton = styled.button`
  display: grid;
  place-items: center;
`;

function N(p: { name: string; fly?: boolean; children: React.ReactNode }) {
  return (
    <IconButton aria-label={p.name}>
      <Svg width="23" height="22" viewBox="0 0 23 22" fill="none">
        {p.children}
        {p.fly && <path d="M21 18v4h-4z" fill="#eee" />}
      </Svg>
    </IconButton>
  );
}

function StatusBar() {
  return (
    <Status>
      <Listener>
        <input aria-label="Macro recorder" />
        <input aria-label="MAXScript listener" placeholder="MAXScript Mini Listener" />
      </Listener>
      <Messages>
        <p>None Selected</p>
        <p>Grid Points snap on Scene Root at [15'10", 0'10", 0'0"]</p>
      </Messages>
      <Coords>
        <CoordRow>
          <Svg width="18" height="17" viewBox="0 0 18 17" fill="none" stroke="#222"><path d="M4.500 4.500h8v8h-8zM.5 5V.5H5M12 .5h4.500V5M16.500 12v4.500H12M5 16.500H.5V12M2.500 5V2.500H5M12 2.500h2.500V5M14.500 12v2.500H12M5 14.500H2.500V12" /></Svg>
          <Svg width="18" height="17" viewBox="0 0 18 17"><path d="M5 7V4c0-3 7-3 7 0v3" fill="none" stroke="#1e1e1e" strokeWidth="1.500" /><path d="M3.500 7.500h10v8h-10z" fill="#555" stroke="#1e1e1e" /><circle cx="8.500" cy="10.500" r="1.500" fill="#1a1a1a" /><path d="M8 11h1v3H8z" fill="#1a1a1a" /></Svg>
          <Svg width="18" height="17" viewBox="0 0 18 17"><path d="M2 1h15v15H2z" fill={L} /><path d="M9.500 5l3.500 3.500L9.500 12 6 8.500z" fill={L} stroke="#333" strokeWidth="1.500" /><path d="M3.500 6V2.500H7M12 2.500h3.500V6M15.500 11v3.500H12M7 14.500H3.500V11M9.500 2v3M9.500 12v3M3 8.500h3M13 8.500h3" stroke="#333" strokeWidth="1.500" fill="none" /></Svg>
          <CoordField><span>X:</span><input defaultValue={`15'10"`} disabled /></CoordField>
          <CoordField><span>Y:</span><input defaultValue={`0'10"`} disabled /></CoordField>
          <CoordField><span>Z:</span><input defaultValue={`0'0"`} disabled /></CoordField>
          <span>Grid = 0'10"</span>
        </CoordRow>
        <TagRow>
          <TagButton aria-label="Time tag"><Svg width="22" height="21" viewBox="0 0 22 21" fill="none"><path d="M11 4l6 3v7l-6 3-6-3V7zM5 7l6 3 6-3M11 10v7" stroke="#222" strokeWidth="3" /><path d="M11 4l6 3v7l-6 3-6-3V7zM5 7l6 3 6-3M11 10v7" stroke={L} strokeWidth="1.500" /></Svg></TagButton>
          <span>Add Time Tag</span>
        </TagRow>
      </Coords>
      <Playback>
        <PlayRow>
          <PlayButton $w={22} aria-label="Go to start"><Svg width="15" height="10" viewBox="0 0 15 10" fill={L}><path d="M0 0h1v10H0zM8 0v10L2 5zM15 0v10L9 5z" /></Svg></PlayButton>
          <Sep />
          <PlayButton $w={20} aria-label="Previous frame"><Svg width="14" height="10" viewBox="0 0 14 10" fill={L}><path d="M6 0v10L0 5zM8 0h2v10H8zM12 0h2v10h-2z" /></Svg></PlayButton>
          <PlayButton $w={24} aria-label="Play"><Svg width="18" height="18" viewBox="0 0 18 18" fill={L}><path d="M2 2l12 7-12 7zM17 14v4h-4z" /></Svg></PlayButton>
          <PlayButton $w={20} aria-label="Next frame"><Svg width="14" height="10" viewBox="0 0 14 10" fill={L}><path d="M8 0v10l6-5zM0 0h2v10H0zM4 0h2v10H4z" /></Svg></PlayButton>
          <Sep />
          <PlayButton $w={22} aria-label="Go to end"><Svg width="15" height="10" viewBox="0 0 15 10" fill={L}><path d="M14 0h1v10h-1zM7 0v10l6-5zM0 0v10l6-5z" /></Svg></PlayButton>
        </PlayRow>
        <PlayRow>
          <PlayButton $w={22} aria-label="Key mode"><Svg width="11" height="8" viewBox="0 0 11 8" fill={L}><path d="M5 0v8L0 4zM6 0v8l5-4z" /></Svg></PlayButton>
          <Sep />
          <Spin $w={68} $h={18}><input aria-label="Current frame" defaultValue="0" /><Arrows /></Spin>
          <Sep />
          <PlayButton $w={20} aria-label="Time configuration"><Svg width="16" height="16" viewBox="0 0 16 16" fill="none"><circle cx="6" cy="6" r="5.500" fill={L} /><path d="M6 2v4h3" stroke="#333" /><circle cx="10.500" cy="10.500" r="3" fill={D} stroke={O} strokeWidth="2.500" strokeDasharray="2 .6" /></Svg></PlayButton>
        </PlayRow>
      </Playback>
      <BigKey aria-label="Set keys">
        <Svg width="32" height="32" viewBox="0 0 32 32" fill="#5a5a5a" stroke="#333"><path d="M10.500 4.500h6v9h9v6h-9v9h-6v-9h-9v-6h9z" /><path d="M18 24c2-1 4 0 4 2s-3 3-4 2-1-3 0-4zM21 24l7-5M25 21l1 2M28 19l1 2" strokeWidth="2" /></Svg>
      </BigKey>
      <Keys>
        <KeyButton>Auto Key</KeyButton>
        <SelectedCell><Dropdown label="Key selection" value="Selected" /></SelectedCell>
        <KeyButton>Set Key</KeyButton>
        <N name="Tangents" fly><path d="M6 18c3-2 2-8 3-11M18 18c-3-2-2-8-3-11" stroke={T} strokeWidth="2" /><path d="M4 5h2M7 4.500h3M14 4.500h3M18 5h2" stroke={L} strokeWidth="2" /><path d="M10.500 2.500h3v4h-3z" fill={D} stroke={L} /></N>
        <KeyButton>Key Filters...</KeyButton>
      </Keys>
      <Nav>
        <N name="Zoom"><circle cx="14" cy="8" r="4.500" stroke={L} strokeWidth="2" /><path d="M11 12l-6 6" stroke={L} strokeWidth="3" /></N>
        <N name="Zoom all"><path d="M9 3h5v5H9zM15 3h4v5h-4zM14 9h5v5h-5z" fill={T} /><circle cx="10" cy="10" r="3.500" fill={D} stroke={L} strokeWidth="2" /><path d="M8 13l-4 4" stroke={L} strokeWidth="2.500" /></N>
        <N name="Zoom extents" fly><path d="M5 7V3h3M15 3h3v4M5 13v4h3M18 13v4h-3" stroke={L} strokeWidth="1.500" /><path d="M11.500 5l5 2-5 2-5-2zM6.500 8l4.500 2v5l-4.500-2zM16.500 8L12 10v5l4.500-2z" fill={T} /></N>
        <N name="Zoom extents all" fly><path d="M12 5l3-2 4 2v9l-3 2-4-3z" fill={T} /><path d="M15 6v9" stroke={D} /><path d="M6 10l3 2-3 2-3-2zM10 13l3 2-3 2-3-2z" fill={L} /></N>
        <N name="Field of view" fly><path d="M6 5l10 6-10 6M10 7c2 2 2 6 0 8" stroke={L} strokeWidth="2" /></N>
        <N name="Walk through" fly><circle cx="11" cy="5" r="2" fill={L} /><path d="M11 7v5l-4 6M11 12l4 6M7 12l1-3 3-1 3 2 2 1" stroke={L} strokeWidth="2" /></N>
        <N name="Orbit" fly><circle cx="12" cy="9" r="5.500" fill={L} /><path d="M12 3.500v6H6.500c0-4 2-6 5.500-6z" fill={T} /><path d="M5 16c5 0 11-4 13-10" stroke={D} strokeWidth="4" /><path d="M5 16c5 0 11-4 13-10" stroke={L} strokeWidth="2" /></N>
        <N name="Maximize viewport"><path d="M4 3h15v15H4z" fill={L} /><path d="M5.500 10.500h6v6h-6zM12 9l5-4M13 5h4v4" stroke="#333" strokeWidth="1.500" /></N>
      </Nav>
    </Status>
  );
}

export default function App() {
  return (
    <Page>
      <Global />
      <TopMenu />
      <MainToolbar />
      <RibbonBar />
      <Main>
        <LayoutTabs />
        <SceneExplorer />
        <Viewports>
          <FlatView name="Top" axes={<><path d="M24.500 38V16" stroke={G} /><path d="M30 38.500h22" stroke={R} /><text x="25" y="15" fill={G}>y</text><text x="50" y="40" fill={R}>x</text><text x="25" y="40" fill={B}>z</text></>} />
          <FlatView name="Front" axes={<><path d="M24.500 38V16" stroke={B} /><path d="M30 38.500h22" stroke={R} /><text x="25" y="15" fill={B}>z</text><text x="50" y="40" fill={R}>x</text><text x="25" y="40" fill={G}>y</text></>} />
          <FlatView name="Left" axes={<><path d="M24.500 38V16" stroke={B} /><path d="M4 38.500h20" stroke={G} /><text x="25" y="15" fill={B}>z</text><text x="25" y="40" fill={R}>x</text><text x="0" y="40" fill={G}>y</text></>} />
          <PerspectiveView />
        </Viewports>
        <CommandPanel />
      </Main>
      <TrackBar />
      <StatusBar />
    </Page>
  );
}
